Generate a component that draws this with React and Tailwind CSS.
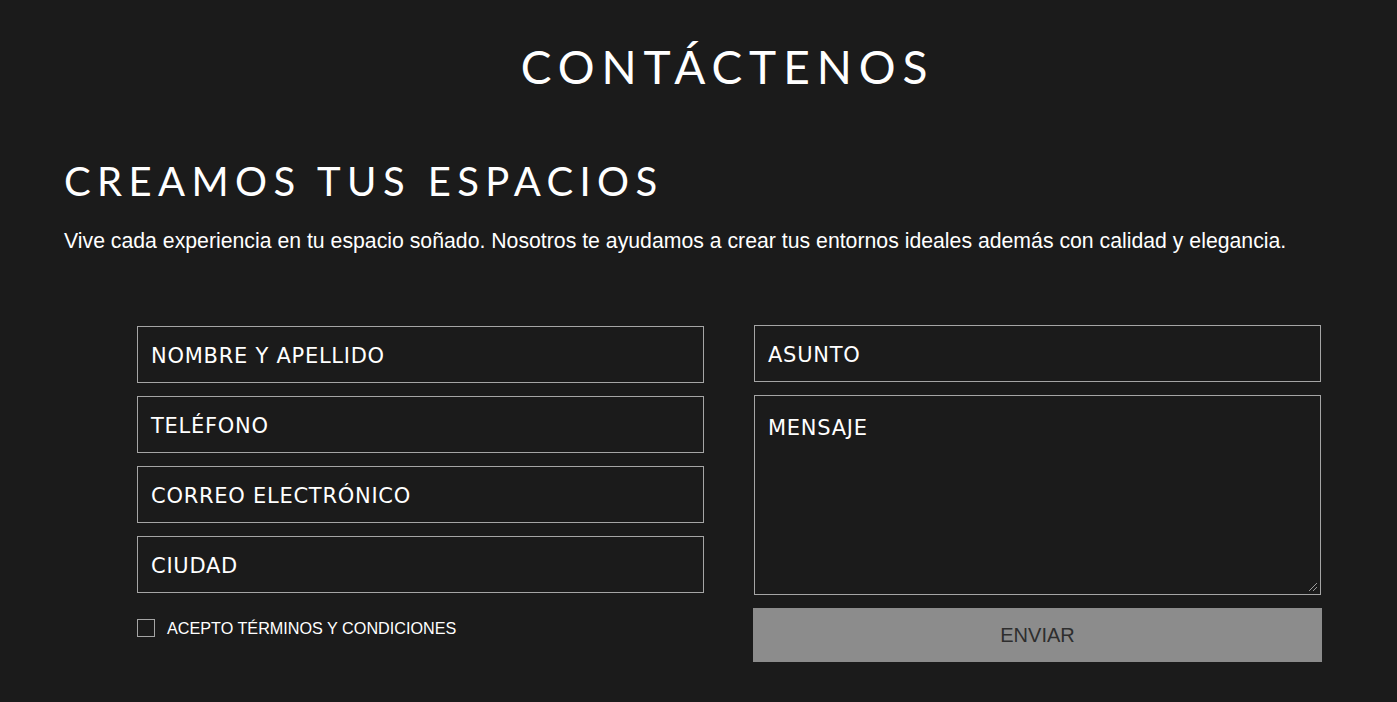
import React from 'react';

function Field({ label }) {
    return (
        <div className="h-[57px] border border-[#a5a5a5] flex items-center pl-[13px] pt-[4px] text-[21px] tracking-[0.035em] text-white font-['DejaVu_Sans','Open_Sans',sans-serif]">
            {label}
        </div>
    );
}

export default function App() {
    return (
        <div className="min-h-screen w-full bg-[#1b1b1b] text-white overflow-hidden">
            {/* Header */}
            <h1 className="pt-[41px] pl-[58px] text-center text-[46px] leading-[52px] tracking-[0.15em] font-[Lato,sans-serif] font-normal">
                CONTÁCTENOS
            </h1>

            <div className="px-[64px] pt-[64px]">
                <h2 className="text-[40px] leading-[48px] tracking-[0.16em] font-[Lato,sans-serif] font-normal">CREAMOS TUS ESPACIOS</h2>
                <p className="mt-[24px] text-[21.25px] leading-[24px] font-['Liberation_Sans',Arial,sans-serif]">
                    Vive cada experiencia en tu espacio soñado. Nosotros te ayudamos a crear tus entornos ideales además con calidad y elegancia.
                </p>
            </div>

            {/* Form */}
            <div className="ml-[137px] w-[1184px] mt-[73px] grid grid-cols-2 gap-x-[50px]">
                <div className="flex flex-col gap-[13px]">
                    <Field label="NOMBRE Y APELLIDO" />
                    <Field label="TELÉFONO" />
                    <Field label="CORREO ELECTRÓNICO" />
                    <Field label="CIUDAD" />
                    <label className="mt-[10px] flex items-center gap-[12px] text-[16.2px] font-['Liberation_Sans',Arial,sans-serif]">
                        <span className="w-[18px] h-[18px] border border-[#a5a5a5]" />
                        ACEPTO TÉRMINOS Y CONDICIONES
                    </label>
                </div>
                <div className="flex flex-col gap-[13px] -mt-[1px]">
                    <Field label="ASUNTO" />
                    <div className="relative h-[200px] border border-[#a5a5a5] pl-[13px] pt-[17px] text-[21px] tracking-[0.035em] font-['DejaVu_Sans','Open_Sans',sans-serif]">
                        MENSAJE
                        <svg className="absolute right-[2px] bottom-[2px]" width="10" height="10" viewBox="0 0 10 10">
                            <path d="M1 9 L9 1 M5 9 L9 5" stroke="#9a9a9a" strokeWidth="1" />
                        </svg>
                    </div>
                    <button className="-mx-[1px] h-[54px] bg-[#8c8c8c] text-[#2e2e2e] text-[20px] font-['Liberation_Sans',Arial,sans-serif]">
                        ENVIAR
                    </button>
                </div>
            </div>
        </div>
    );
}
